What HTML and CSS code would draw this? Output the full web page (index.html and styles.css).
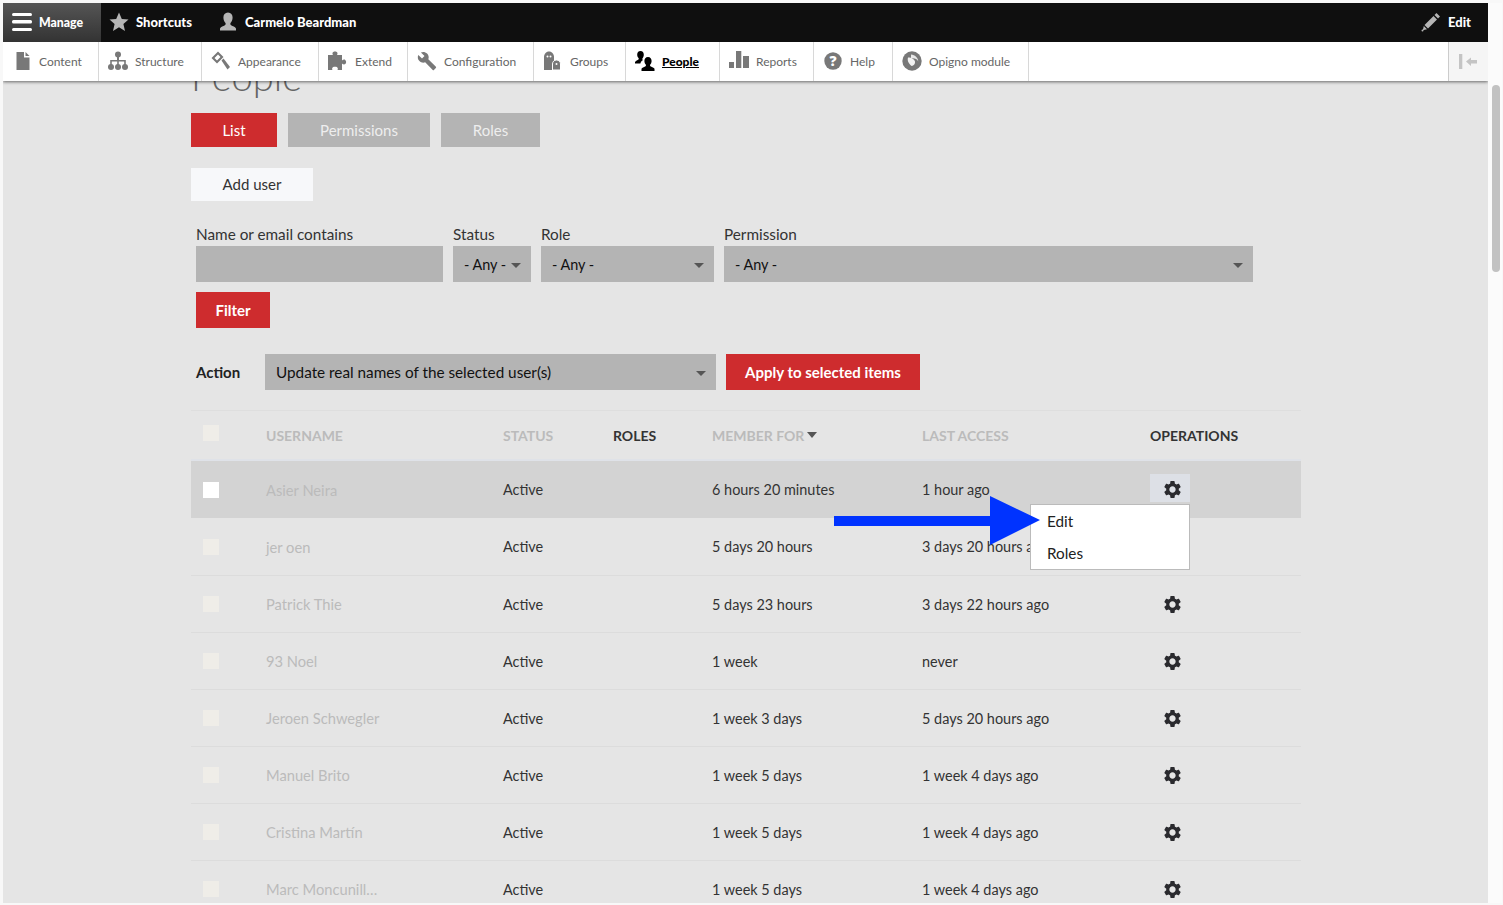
FILE: index.html
```html
<!DOCTYPE html>
<html lang="en">
<head>
  <meta charset="UTF-8" />
  <title>People</title>
  <link rel="stylesheet" href="styles.css">
</head>
<body>
  <svg class="defs" width="0" height="0">
    <symbol id="gear" viewBox="0 0 24 24"><path d="M19.14 12.94c.04-.3.06-.61.06-.94 0-.32-.02-.64-.07-.94l2.03-1.58a.49.49 0 0 0 .12-.61l-1.92-3.32a.488.488 0 0 0-.59-.22l-2.39.96c-.5-.38-1.03-.7-1.62-.94l-.36-2.54a.484.484 0 0 0-.48-.41h-3.84c-.24 0-.43.17-.47.41l-.36 2.54c-.59.24-1.13.57-1.62.94l-2.39-.96c-.22-.08-.47 0-.59.22L2.74 8.87c-.12.21-.08.47.12.61l2.03 1.58c-.05.3-.09.63-.09.94s.02.64.07.94l-2.03 1.58a.49.49 0 0 0-.12.61l1.92 3.32c.12.22.37.29.59.22l2.39-.96c.5.38 1.03.7 1.62.94l.36 2.54c.05.24.24.41.48.41h3.84c.24 0 .44-.17.47-.41l.36-2.54c.59-.24 1.13-.56 1.62-.94l2.39.96c.22.08.47 0 .59-.22l1.92-3.32c.12-.22.07-.47-.12-.61l-2.01-1.58zM12 15.6c-1.98 0-3.6-1.62-3.6-3.6s1.62-3.6 3.6-3.6 3.6 1.62 3.6 3.6-1.62 3.6-3.6 3.6z"/></symbol>
  </svg>

  <div class="frame">
    <div class="page">
      <header class="toolbar">
        <div class="bar">
          <a class="bar-item bar-manage">
            <svg width="20" height="20" viewBox="0 0 20 20"><rect y="1" width="20" height="3" rx="1.5"/><rect y="8" width="20" height="3.4" rx="1.5"/><rect y="16" width="20" height="3" rx="1.5"/></svg>
            Manage
          </a>
          <a class="bar-item bar-shortcuts">
            <svg class="bar-icon" width="20" height="20" viewBox="0 0 20 20"><path d="M10 .5l2.8 6.4 6.7.6-5.1 4.5 1.6 6.9L10 15.2l-6 3.7 1.6-6.9L.5 7.5l6.7-.6z"/></svg>
            Shortcuts
          </a>
          <a class="bar-item bar-user">
            <svg class="bar-icon" width="20" height="20" viewBox="0 0 20 20"><path d="M10 .5c3 0 4.6 2.2 4.6 5 0 2.4-1 4.5-2.1 5.6-.3.9-.2 1.7.6 2.2 1.700 1 3.900 1.500 4.900 3.200v2H2v-2c1-1.700 3.200-2.200 4.900-3.200.8-.5.9-1.300.6-2.200C6.400 10 5.400 7.900 5.400 5.500c0-2.800 1.600-5 4.600-5z"/></svg>
            Carmelo Beardman
          </a>
          <a class="bar-item bar-edit">
            <svg class="bar-icon" width="20" height="20" viewBox="0 0 20 20"><path d="M15.500 1l3.500 3.500-2 2L13.500 3zM12.500 4l3.500 3.500-9 9L3.500 13zM2.800 14l3.200 3.200-4.200 1z"/><circle cx="1.500" cy="18.500" r="1"/></svg>
            Edit
          </a>
        </div>
        <nav class="tray">
          <a class="tray-item">
            <svg width="20" height="20" viewBox="0 0 20 20"><path d="M4.500 1h7.500v5.500h5.500V19h-13z"/><path d="M13.500 1l4 4h-4z"/></svg>
            Content
          </a>
          <a class="tray-item">
            <svg width="20" height="20" viewBox="0 0 20 20"><circle cx="10" cy="3.500" r="3"/><circle cx="3" cy="16" r="3"/><circle cx="10" cy="16" r="3"/><circle cx="17" cy="16" r="3"/><path d="M9 5h2v4h6.800v5h-1.600v-3.400H10.800V14H9.200v-3.400H3.800V14H2.200V9H9z"/></svg>
            Structure
          </a>
          <a class="tray-item">
            <svg width="20" height="20" viewBox="0 0 20 20"><path d="M7 .5L.5 7l5.500 5.500L12.500 6zM7 3.500L9.500 6 6 9.500 3.500 7z" fill-rule="evenodd"/><path d="M10.500 9.500l2-2 6.500 8.500-2.500 2.500z"/></svg>
            Appearance
          </a>
          <a class="tray-item">
            <svg width="20" height="20" viewBox="0 0 20 20"><path d="M0 4h5c-.9-1-.9-3.500 2-3.500S9.900 3 9 4h5v5.500c1-.9 2.200-1.200 3.200-.6 1.300.8 1.300 3.400 0 4.200-1 .6-2.200.3-3.200-.6V19H9.500c.7-1 .6-3.200-2.500-3.200S3.800 18 4.500 19H0z"/></svg>
            Extend
          </a>
          <a class="tray-item">
            <svg width="20" height="20" viewBox="0 0 24 24"><path d="M22.700 19l-9.100-9.100c.9-2.300.4-5-1.500-6.900-2-2-5-2.400-7.400-1.300L9 6 6 9 1.600 4.700C.4 7.100.9 10.100 2.900 12.100c1.900 1.900 4.600 2.400 6.900 1.500l9.100 9.100c.4.4 1 .4 1.400 0l2.300-2.300c.5-.4.5-1.100.1-1.400z"/></svg>
            Configuration
          </a>
          <a class="tray-item">
            <svg width="20" height="20" viewBox="0 0 20 20"><path d="M1 19V6c0-3 2-5.500 5-5.500S11 3 11 6v13z"/><path d="M9.500 19v-6c0-2.500 1.800-4 4-4s4 1.500 4 4v6z" stroke="#fff" stroke-width="1"/><circle cx="4.500" cy="5.500" r="1" fill="#fff"/><circle cx="7.500" cy="5.500" r="1" fill="#fff"/><circle cx="13.500" cy="13" r="1" fill="#fff"/></svg>
            Groups
          </a>
          <a class="tray-item tray-active">
            <svg width="20" height="20" viewBox="0 0 20 20"><path d="M5.500 0c2.200 0 3.300 1.700 3.300 3.700 0 1.500-.6 2.900-1.400 3.700-.2.800 0 1.200.6 1.500-1.500 1-2.300 2-2.600 3.600H0v-1.500c.8-1.400 2.600-1.800 3.500-2.600.3-.3.300-.7.100-1.300C2.800 6.300 2.200 5 2.200 3.700 2.200 1.700 3.300 0 5.500 0z"/><path d="M13 6c2.400 0 3.600 1.800 3.600 3.900 0 1.500-.7 3-1.500 3.800-.2.800 0 1.300.8 1.700 1.300.6 3 1 3.600 2.300V20H6.500v-2.300c.6-1.300 2.300-1.700 3.600-2.300.8-.4 1-.9.800-1.700-.8-.8-1.500-2.300-1.500-3.800C9.400 7.800 10.600 6 13 6z"/></svg>
            People
          </a>
          <a class="tray-item">
            <svg width="20" height="20" viewBox="0 0 20 20"><rect y="11" width="5" height="6"/><rect x="7" width="5.300" height="17"/><rect x="14" y="5" width="6" height="12"/></svg>
            Reports
          </a>
          <a class="tray-item">
            <svg width="20" height="20" viewBox="0 0 20 20"><circle cx="10" cy="10" r="8.700"/><text class="help-mark" x="10" y="15" text-anchor="middle">?</text></svg>
            Help
          </a>
          <a class="tray-item">
            <svg width="20" height="20" viewBox="0 0 20 20"><circle cx="10" cy="10" r="9.700"/><path d="M9 3.500c4 .2 7 3.200 7.300 7-1.300-2.300-3.800-3.600-7.300-3z" fill="#e8e8e8"/><path d="M6 6.500c2.500-.5 5.500.8 6.700 3.200 1 2-.3 4.700-3 5.300C7 13 5 10 6 6.500z" fill="#f2f2f2"/></svg>
            Opigno module
          </a>
          <span class="tray-spacer"></span>
          <a class="tray-toggle">
            <svg width="22" height="18" viewBox="0 0 22 18"><rect x="1" y="1" width="3.300" height="15"/><path d="M8 8.500l5-4v2.500h6v3.500h-6v2.500z"/></svg>
          </a>
        </nav>
      </header>

      <main class="content">
        <h1 class="title">People</h1>

        <ul class="tabs">
          <li class="tab tab-active">List</li>
          <li class="tab tab-perm">Permissions</li>
          <li class="tab tab-roles">Roles</li>
        </ul>

        <a class="add-user">Add user</a>

        <form class="filters">
          <label class="field field-name">
            <span class="field-label">Name or email contains</span>
            <input class="text-input" type="text">
          </label>
          <label class="field field-status">
            <span class="field-label">Status</span>
            <span class="select">- Any -</span>
          </label>
          <label class="field field-role">
            <span class="field-label">Role</span>
            <span class="select">- Any -</span>
          </label>
          <label class="field field-perm">
            <span class="field-label">Permission</span>
            <span class="select">- Any -</span>
          </label>
        </form>
        <button class="btn-red btn-filter" type="button">Filter</button>

        <div class="action-row">
          <span class="action-label">Action</span>
          <span class="select action-select">Update real names of the selected user(s)</span>
          <button class="btn-red btn-apply" type="button">Apply to selected items</button>
        </div>

        <table class="users">
          <colgroup>
            <col class="c-check"><col class="c-name"><col class="c-status"><col class="c-roles"><col class="c-member"><col class="c-last"><col class="c-ops">
          </colgroup>
          <thead>
            <tr>
              <th><span class="check"></span></th>
              <th class="muted">Username</th>
              <th class="muted">Status</th>
              <th>Roles</th>
              <th class="muted">Member for<span class="sort"></span></th>
              <th class="muted">Last access</th>
              <th>Operations</th>
            </tr>
          </thead>
          <tbody>
            <tr class="row-hover">
              <td><span class="check check-on"></span></td>
              <td class="name">Asier Neira</td>
              <td>Active</td>
              <td></td>
              <td>6 hours 20 minutes</td>
              <td>1 hour ago</td>
              <td>
                <div class="ops ops-open">
                  <svg class="gear"><use href="#gear"/></svg>
                  <ul class="menu">
                    <li>Edit</li>
                    <li>Roles</li>
                  </ul>
                  <svg class="arrow" width="206" height="50" viewBox="0 0 206 50"><path d="M0 20h156V0l50 24-50 25V30H0z"/></svg>
                </div>
              </td>
            </tr>
            <tr>
              <td><span class="check"></span></td>
              <td class="name">jer oen</td>
              <td>Active</td>
              <td></td>
              <td>5 days 20 hours</td>
              <td>3 days 20 hours ago</td>
              <td></td>
            </tr>
            <tr>
              <td><span class="check"></span></td>
              <td class="name">Patrick Thie</td>
              <td>Active</td>
              <td></td>
              <td>5 days 23 hours</td>
              <td>3 days 22 hours ago</td>
              <td><div class="ops"><svg class="gear"><use href="#gear"/></svg></div></td>
            </tr>
            <tr>
              <td><span class="check"></span></td>
              <td class="name">93 Noel</td>
              <td>Active</td>
              <td></td>
              <td>1 week</td>
              <td>never</td>
              <td><div class="ops"><svg class="gear"><use href="#gear"/></svg></div></td>
            </tr>
            <tr>
              <td><span class="check"></span></td>
              <td class="name">Jeroen Schwegler</td>
              <td>Active</td>
              <td></td>
              <td>1 week 3 days</td>
              <td>5 days 20 hours ago</td>
              <td><div class="ops"><svg class="gear"><use href="#gear"/></svg></div></td>
            </tr>
            <tr>
              <td><span class="check"></span></td>
              <td class="name">Manuel Brito</td>
              <td>Active</td>
              <td></td>
              <td>1 week 5 days</td>
              <td>1 week 4 days ago</td>
              <td><div class="ops"><svg class="gear"><use href="#gear"/></svg></div></td>
            </tr>
            <tr>
              <td><span class="check"></span></td>
              <td class="name">Cristina Martín</td>
              <td>Active</td>
              <td></td>
              <td>1 week 5 days</td>
              <td>1 week 4 days ago</td>
              <td><div class="ops"><svg class="gear"><use href="#gear"/></svg></div></td>
            </tr>
            <tr>
              <td><span class="check"></span></td>
              <td class="name">Marc Moncunill…</td>
              <td>Active</td>
              <td></td>
              <td>1 week 5 days</td>
              <td>1 week 4 days ago</td>
              <td><div class="ops"><svg class="gear"><use href="#gear"/></svg></div></td>
            </tr>
          </tbody>
        </table>
      </main>
    </div>

    <div class="rail"><div class="thumb"></div></div>
  </div>
</body>
</html>
```

FILE: styles.css
```css
* {
  box-sizing: border-box;
}
html, body {
  margin: 0;
  height: 905px;
  overflow: hidden;
}
body {
  font-family: "Lato", "Open Sans", sans-serif;
  font-size: 15px;
  color: #333;
  background: #f8f8f8;
}
.defs {
  position: absolute;
}
.frame {
  display: flex;
  height: 903px;
  padding: 3px 0 0 3px;
}
.page {
  position: relative;
  width: 1485px;
  height: 900px;
  overflow: hidden;
  background: #e5e5e5;
}
.rail {
  width: 14px;
  background: #fbfbfb;
  padding: 82px 2px 0 4px;
}
.thumb {
  height: 187px;
  border-radius: 4px;
  background: #c2c2c2;
}

/* toolbar */
.toolbar {
  position: absolute;
  top: 0;
  left: 0;
  right: 0;
  z-index: 5;
  box-shadow: 0 1px 3px rgba(0, 0, 0, 0.55);
}
.bar {
  display: flex;
  height: 39px;
  background: #0f0f0f;
  color: #fff;
  font-weight: 900;
  font-size: 13px;
}
.bar-item {
  display: flex;
  align-items: center;
  gap: 7px;
  height: 39px;
  padding-bottom: 1px;
}
.bar-item svg {
  fill: #fff;
  flex: none;
}
.bar-item .bar-icon {
  fill: #b5b5b5;
}
.bar-manage {
  width: 98px;
  padding-left: 9px;
  font-size: 12.3px;
  background: linear-gradient(#555, #333);
}
.bar-shortcuts {
  padding-left: 8px;
}
.bar-user {
  margin-left: 26px;
}
.bar-edit {
  margin-left: auto;
  padding-right: 17px;
}
.tray {
  display: grid;
  grid-template-columns: 96px 103px 117px 89px 126px 92px 94px 94px 79px 136px 1fr 40px;
  height: 39px;
  background: #fff;
  color: #666;
  font-size: 12px;
}
.tray-item {
  display: flex;
  align-items: center;
  gap: 7px;
  padding-left: 9px;
  padding-bottom: 1px;
  border-right: 1px solid #d8d8d8;
}
.tray-item svg {
  fill: #787878;
  flex: none;
}
.tray-active {
  color: #000;
  font-weight: 900;
  text-decoration: underline;
}
.tray-active svg {
  fill: #000;
}
.help-mark {
  font-family: "Open Sans", sans-serif;
  font-size: 14px;
  font-weight: 800;
  fill: #fff;
}
.tray-toggle {
  display: flex;
  align-items: center;
  justify-content: center;
  background: #f5f5f5;
  border-left: 1px solid #ccc;
}
.tray-toggle svg {
  fill: #c4c4c4;
}

/* content */
.content {
  padding: 53px 185px 0 188px;
}
.title {
  margin: 0;
  height: 57px;
  font-size: 38px;
  font-weight: 300;
  line-height: 40px;
  color: #666;
}
.tabs {
  display: flex;
  gap: 11px;
  margin: 0 0 21px;
  padding: 0;
  list-style: none;
}
.tab {
  height: 34px;
  line-height: 34px;
  text-align: center;
  background: #b4b4b4;
  color: #eee;
}
.tab-active {
  width: 86px;
  background: #ce2c2e;
  color: #fff;
}
.tab-perm {
  width: 142px;
}
.tab-roles {
  width: 99px;
}
.add-user {
  display: block;
  width: 122px;
  height: 33px;
  line-height: 33px;
  text-align: center;
  background: #f7f8fa;
}
.filters {
  display: flex;
  gap: 10px;
  margin: 24px 0 10px 5px;
}
.field {
  display: flex;
  flex-direction: column;
}
.field-label {
  height: 21px;
  line-height: 19px;
  font-size: 15.3px;
}
.field-name { width: 247px; }
.field-status { width: 78px; }
.field-role { width: 173px; }
.field-perm { width: 529px; }
.text-input {
  height: 36px;
  border: 0;
  background: #b4b4b4;
}
.select {
  position: relative;
  display: block;
  height: 36px;
  line-height: 38px;
  padding-left: 11px;
  background: #b4b4b4;
  color: #111;
  font-size: 14.4px;
}
.select::after {
  content: "";
  position: absolute;
  right: 10px;
  top: 17px;
  border-left: 5px solid transparent;
  border-right: 5px solid transparent;
  border-top: 5px solid #555;
}
.btn-red {
  display: block;
  height: 36px;
  border: 0;
  padding: 0;
  background: #ce2c2e;
  color: #fff;
  font-family: inherit;
  font-size: 15px;
  font-weight: 700;
}
.btn-filter {
  width: 74px;
  margin-left: 5px;
}
.action-row {
  display: flex;
  align-items: center;
  margin: 26px 0 20px 5px;
}
.action-label {
  width: 69px;
  font-weight: 700;
  color: #222;
}
.action-select {
  width: 451px;
  line-height: 36px;
  font-size: 15.3px;
}
.btn-apply {
  width: 194px;
  margin-left: 10px;
}

/* table */
.users {
  width: 1110px;
  table-layout: fixed;
  border-collapse: separate;
  border-spacing: 0;
  border-top: 1px solid #dedede;
  font-size: 14.45px;
}
.c-check { width: 75px; }
.c-name { width: 237px; }
.c-status { width: 110px; }
.c-roles { width: 99px; }
.c-member { width: 210px; }
.c-last { width: 228px; }
.c-ops { width: 151px; }
.users th {
  height: 50px;
  padding: 0;
  text-align: left;
  text-transform: uppercase;
  font-size: 14px;
  font-weight: 700;
  color: #333;
  border-bottom: 2px solid #dfe2e8;
}
.users th.muted {
  color: #bbb;
}
.users th .check {
  margin-bottom: 4px;
}
.users td {
  height: 57px;
  padding: 0;
  border-bottom: 1px solid #dcdcdc;
}
.users td.name {
  color: #bbb;
  font-size: 14.7px;
}
.users .row-hover td {
  background: #d3d3d3;
  border-bottom: 0;
}
.users .row-hover + tr td {
  height: 58px;
}
.check {
  display: block;
  width: 16px;
  height: 16px;
  margin-left: 12px;
  background: #efede8;
}
.check-on {
  background: #fff;
}
.sort {
  display: inline-block;
  margin-left: 3px;
  vertical-align: 3px;
  border-left: 5.5px solid transparent;
  border-right: 5.5px solid transparent;
  border-top: 6px solid #555;
}
.ops {
  position: relative;
  display: flex;
  align-items: center;
  justify-content: center;
  width: 40px;
  height: 28px;
}
.ops-open {
  margin-top: -3px;
  padding-top: 3px;
  background: #dde0e6;
}
.gear {
  width: 21px;
  height: 21px;
  margin-left: 5px;
  fill: #2a2a2e;
}
.menu {
  position: absolute;
  left: -120px;
  top: 30px;
  z-index: 2;
  width: 160px;
  height: 66px;
  margin: 0;
  padding: 0 0 0 16px;
  list-style: none;
  font-size: 15.3px;
  background: #fff;
  border: 1px solid #bbb;
}
.menu li {
  height: 32px;
  line-height: 32px;
  color: #222;
}
.arrow {
  position: absolute;
  left: -316px;
  top: 22px;
  z-index: 3;
  fill: #0033ff;
}
```
